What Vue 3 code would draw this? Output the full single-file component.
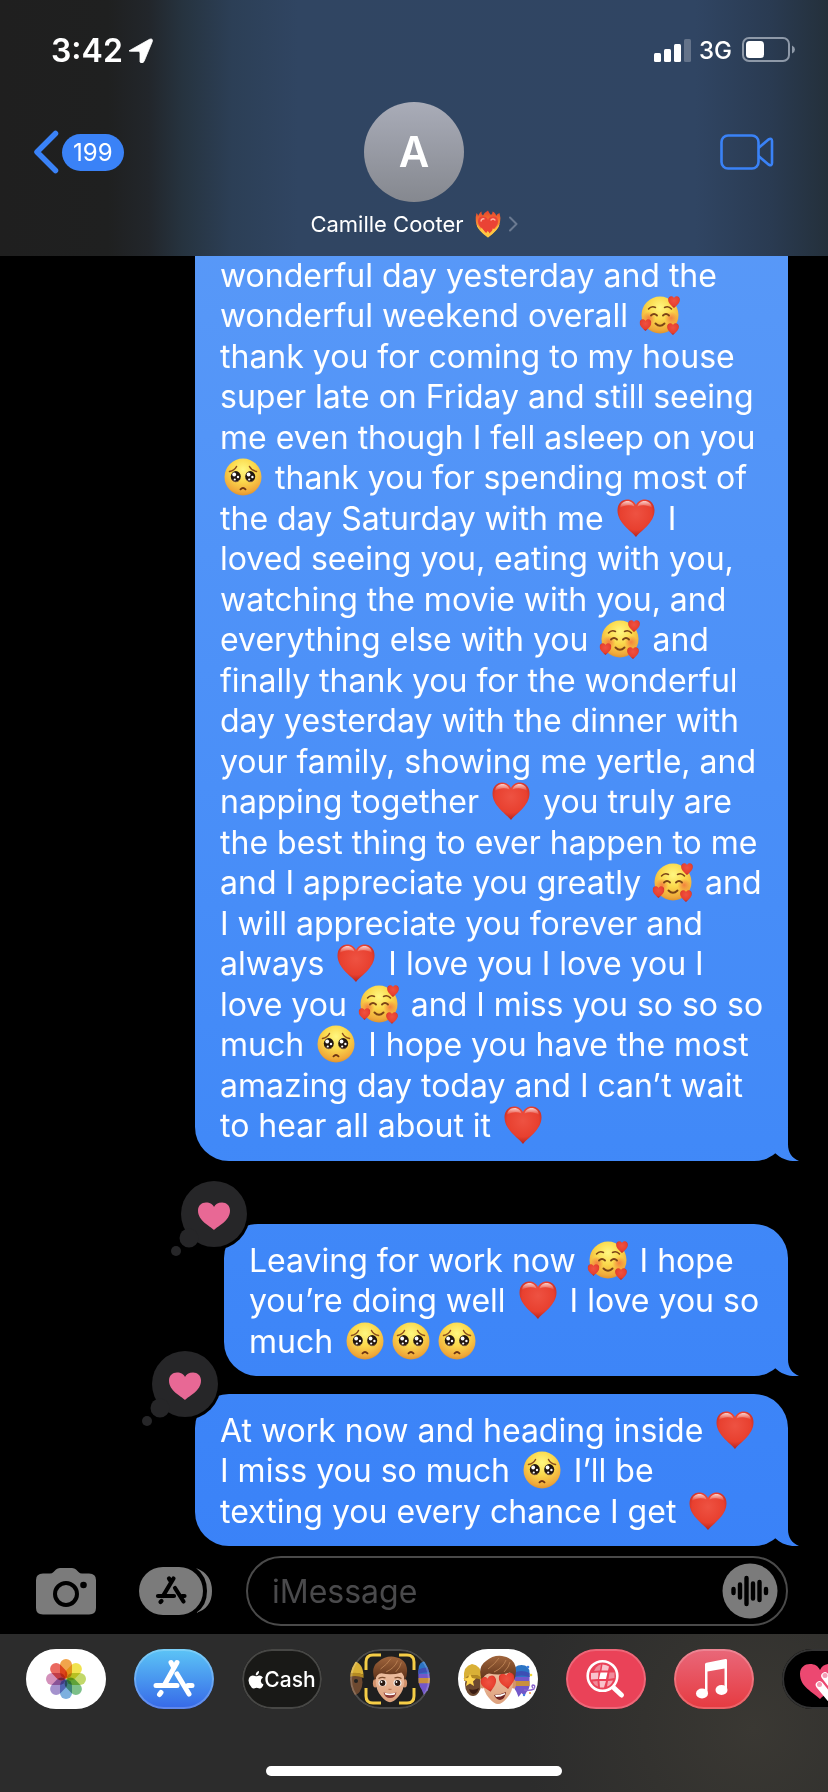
<script setup>
const LABELS = { '🥰': 'smiling face with hearts', '🥺': 'pleading face', '❤': 'red heart' }
const IDS = { '🥰': '#e-love', '🥺': '#e-plead', '❤': '#e-heart' }

const tokens = (line) =>
  line.split(/(🥰|🥺|❤)/u).filter(Boolean).map((t) => ({ text: t, icon: IDS[t], label: LABELS[t] }))

const messages = [
  {
    id: 1,
    kind: 'long',
    lines: [
      'wonderful day yesterday and the',
      'wonderful weekend overall 🥰',
      'thank you for coming to my house',
      'super late on Friday and still seeing',
      'me even though I fell asleep on you',
      '🥺 thank you for spending most of',
      'the day Saturday with me ❤ I',
      'loved seeing you, eating with you,',
      'watching the movie with you, and',
      'everything else with you 🥰 and',
      'finally thank you for the wonderful',
      'day yesterday with the dinner with',
      'your family, showing me yertle, and',
      'napping together ❤ you truly are',
      'the best thing to ever happen to me',
      'and I appreciate you greatly 🥰 and',
      'I will appreciate you forever and',
      'always ❤ I love you I love you I',
      'love you 🥰 and I miss you so so so',
      'much 🥺 I hope you have the most',
      'amazing day today and I can’t wait',
      'to hear all about it ❤',
    ].map(tokens),
  },
  {
    id: 2,
    kind: 'narrow',
    loved: true,
    lines: ['Leaving for work now 🥰 I hope', 'you’re doing well ❤ I love you so', 'much 🥺🥺🥺'].map(tokens),
  },
  {
    id: 3,
    kind: 'wide',
    loved: true,
    lines: ['At work now and heading inside ❤', 'I miss you so much 🥺 I’ll be', 'texting you every chance I get ❤'].map(tokens),
  },
]

const petals = ['#f09a37', '#f0e03c', '#bcd45a', '#6fb97c', '#6fa8dc', '#9a86c8', '#cf85b4', '#e8584f']
</script>

<template>
  <div class="phone">
    <svg class="defs" aria-hidden="true">
      <defs>
        <radialGradient id="g-face" cx=".5" cy=".3" r=".72">
          <stop offset="0" stop-color="#fff780" />
          <stop offset=".45" stop-color="#fbd94c" />
          <stop offset=".85" stop-color="#f0a93a" />
          <stop offset="1" stop-color="#dc8f2c" />
        </radialGradient>
        <radialGradient id="g-blush">
          <stop offset="0" stop-color="#f2693c" stop-opacity=".75" />
          <stop offset="1" stop-color="#f2693c" stop-opacity="0" />
        </radialGradient>
        <radialGradient id="g-heart" cx=".5" cy=".38" r=".66">
          <stop offset="0" stop-color="#ee5242" />
          <stop offset=".65" stop-color="#e8402f" />
          <stop offset="1" stop-color="#a81f1c" />
        </radialGradient>
        <linearGradient id="g-gloss" x2="0" y2="1">
          <stop offset="0" stop-color="#fff" stop-opacity=".75" />
          <stop offset="1" stop-color="#fff" stop-opacity="0" />
        </linearGradient>
        <linearGradient id="g-flame" x2="0" y2="1">
          <stop offset="0" stop-color="#e8402a" />
          <stop offset=".5" stop-color="#f78a35" />
          <stop offset="1" stop-color="#ffd94d" />
        </linearGradient>
        <linearGradient id="g-hair" x2="0" y2="1">
          <stop offset="0" stop-color="#a0653c" />
          <stop offset="1" stop-color="#5c3018" />
        </linearGradient>
        <linearGradient id="g-skin" x2="0" y2="1">
          <stop offset="0" stop-color="#f0c4a6" />
          <stop offset="1" stop-color="#dda17d" />
        </linearGradient>
        <symbol id="heart-shape" viewBox="0 0 38 38">
          <path d="M19 38C15 32.500 .5 24 .5 11.500C.5 4.500 5 .5 10 .5C14 .5 17.500 2.500 19 6C20.500 2.500 24 .5 28 .5C33 .5 37.500 4.500 37.500 11.500C37.500 24 23 32.500 19 38Z" fill="url(#g-heart)" />
        </symbol>
        <symbol id="e-heart" viewBox="0 0 46 38">
          <use href="#heart-shape" x="4" y="0" width="38" height="38" />
          <path d="M7 9C7.500 4 11 2 14.500 2C18 2 21 4.500 21.500 7.500C17 5.500 11 6 7 9ZM24.500 7.500C25 4.500 28 2 31.500 2C35 2 38.500 4 39 9C35 6 29 5.500 24.500 7.500Z" fill="url(#g-gloss)" />
        </symbol>
        <symbol id="e-plead" viewBox="0 0 46 38">
          <circle cx="23" cy="19" r="18.500" fill="url(#g-face)" />
          <ellipse cx="15.800" cy="18.500" rx="5" ry="5.400" fill="#221610" />
          <ellipse cx="30.200" cy="18.500" rx="5" ry="5.400" fill="#221610" />
          <path d="M12 21.500a4.500 4.500 0 0 0 7 1M26.500 21.500a4.500 4.500 0 0 0 7 1" fill="none" stroke="#7a5a40" stroke-width="1" />
          <g fill="#fff">
            <circle cx="14.200" cy="16.500" r="1.900" /><circle cx="28.600" cy="16.500" r="1.900" />
            <circle cx="18" cy="19" r="1.200" /><circle cx="32.400" cy="19" r="1.200" />
            <circle cx="14.800" cy="21.500" r="1.100" /><circle cx="29.200" cy="21.500" r="1.100" />
          </g>
          <path d="M9.500 13.500Q14.500 12.500 16.500 8.500M36.500 13.500Q31.500 12.500 29.500 8.500" fill="none" stroke="#8a4b1c" stroke-width="1.500" stroke-linecap="round" />
          <path d="M20.500 31.300Q23 28.800 25.500 31.300" fill="none" stroke="#6d3413" stroke-width="1.900" stroke-linecap="round" />
        </symbol>
        <symbol id="e-love" viewBox="0 0 46 38" overflow="visible">
          <circle cx="23" cy="19" r="18.500" fill="url(#g-face)" />
          <circle cx="12" cy="22" r="6.500" fill="url(#g-blush)" />
          <circle cx="34" cy="22" r="6.500" fill="url(#g-blush)" />
          <g fill="none" stroke="#7b4416" stroke-linecap="round">
            <path d="M11.500 13Q14.500 9.500 18.500 11.500M34.500 13Q31.500 9.500 27.500 11.500" stroke-width="1.500" />
            <path d="M14 19.500Q17 16.500 20 19.500M26 19.500Q29 16.500 32 19.500" stroke-width="1.900" />
            <path d="M18.500 27.500Q23 32 27.500 27.500" stroke-width="1.900" />
          </g>
          <use href="#heart-shape" x="31" y="0" width="12" height="12" />
          <use href="#heart-shape" x="2.500" y="23" width="12" height="12" />
          <use href="#heart-shape" x="30" y="27" width="12" height="12" />
        </symbol>
        <symbol id="side-left" viewBox="0 0 20 34">
          <ellipse cx="10" cy="21" rx="8" ry="12" fill="#6d4930" />
          <path d="M1 15Q0 3 9 1Q18 2 19 14Q10 10 1 15Z" fill="#d9b036" />
          <path d="M1 15Q10 9.500 19 14V17Q10 13 1 18Z" fill="#b58a22" />
        </symbol>
        <symbol id="side-right" viewBox="0 0 20 34">
          <path d="M2 10H18V22Q17 27 15 28L13 32L10 29L7 33L5 28Q1 24 2 10Z" fill="#7257c9" />
          <path d="M2 9Q2 1 10 1Q18 1 18 9V13H2Z" fill="#2c74c4" />
          <path d="M2 9Q10 5 18 9V13Q10 10 2 13Z" fill="#3c4fb4" />
          <path d="M2 17H18V22H2Z" fill="#c98f3d" />
        </symbol>
        <symbol id="boy" viewBox="0 0 40 50">
          <ellipse cx="4.500" cy="29" rx="2.500" ry="4.500" fill="#d4936c" />
          <ellipse cx="35.500" cy="29" rx="2.500" ry="4.500" fill="#d4936c" />
          <path d="M5 18Q5 10 20 10Q35 10 35 18V28Q34.500 37 29 43Q24 49 20 49Q16 49 11 43Q5.500 37 5 28Z" fill="url(#g-skin)" />
          <path d="M4 26Q-1 12 8 6Q15 0 24 1Q38 3 38 16Q38 22 35.500 26Q35.500 21 32 17.500Q22 21 11 18.500Q6 19 4 26Z" fill="url(#g-hair)" />
          <path d="M10 14Q17 9 21 3M16 17Q25 13 28 5M26 17Q31 12 32 7" fill="none" stroke="#b87f52" stroke-width="1" />
        </symbol>
      </defs>
    </svg>

    <header class="header">
      <div class="status">
        <span class="time">3:42</span>
        <svg class="arrow" width="24" height="25" viewBox="0 0 24 25"><path d="M1.500 12L20.500 1.300Q24 0 23.300 3.500L15 23.500Q13 26.500 11 24V15Q11 13.300 9.300 13.300H1.300Q-1.500 13 1.500 12Z" fill="#fff" stroke="#fff" stroke-width=".8" stroke-linejoin="round" /></svg>
        <svg class="signal" width="37" height="24" viewBox="0 0 37 24" fill="#fff">
          <rect x="0" y="15" width="7" height="9" rx="1.500" /><rect x="10" y="11" width="7" height="13" rx="1.500" />
          <rect x="20" y="6" width="7" height="18" rx="1.500" /><rect x="30" y="1" width="7" height="23" rx="1.500" opacity=".25" />
        </svg>
        <span class="network">3G</span>
        <svg width="54" height="26" viewBox="0 0 54 26">
          <rect x="1" y="1" width="46" height="23" rx="6" fill="none" stroke="#8e99a8" stroke-width="2" />
          <rect x="4" y="4" width="18" height="17" rx="3.500" fill="#fff" />
          <path d="M50 8.500Q53 10 53 12.500Q53 15 50 16.500Z" fill="#8e99a8" />
        </svg>
      </div>
      <div class="nav">
        <button class="back" type="button" aria-label="Back, 199 unread">
          <svg width="26" height="44" viewBox="0 0 26 44"><path d="M21.500 3.500L3 22L21.500 40.500" fill="none" stroke="#3a82f7" stroke-width="5.500" stroke-linecap="round" stroke-linejoin="round" /></svg>
          <span class="unread">199</span>
        </button>
        <button class="contact" type="button">
          <span class="avatar">A</span>
          <span class="name">
            Camille Cooter
            <svg class="fire" width="26" height="28" viewBox="0 0 26 28" role="img" aria-label="heart on fire">
              <path d="M13 27.500C8 23 1 18 .8 11Q.5 6 1.500 3Q3 4 3 6Q5 2 6.500 1.500Q6 4 8 5.500Q10 2 13 .5Q14 3 16 5Q18 3 17.500 1.500Q21 3 21 6Q22 4 24.500 3Q26 8 25 12C24 19 18 23 13 27.500Z" fill="url(#g-flame)" />
              <path d="M13 25C9 20 3 17 3 11.500Q3 6.500 7.500 6.500Q12 6.500 13 10Q14 6.500 18.500 6.500Q23 6.500 23 11.500C23 17 17 20 13 25Z" fill="#ea4335" />
              <path d="M6 11Q6.500 8.500 9 8.800M16 10Q18 8 20 10" fill="none" stroke="#ffb0a0" stroke-width="1.300" stroke-linecap="round" />
              <path d="M1.500 14Q4 17 5 20Q6.500 19 6.500 17.500Q9.500 20.500 9.500 23.500Q12 23 12.500 21Q14.500 22 14.500 24Q18 21 17.500 18.500Q19.500 19 20 19.500Q22 17 24.500 14Q24 19.500 13 27.500Q2 20 1.500 14Z" fill="#ffc642" />
            </svg>
            <svg width="9" height="16" viewBox="0 0 9 16"><path d="M1 1.500L7.500 8L1 14.500" fill="none" stroke="#6b7a91" stroke-width="2" stroke-linecap="round" stroke-linejoin="round" /></svg>
          </span>
        </button>
        <button class="video" type="button" aria-label="Video call">
          <svg width="54" height="36" viewBox="0 0 54 36" fill="none" stroke="#3a82f7" stroke-width="2.600" stroke-linejoin="round">
            <rect x="1.500" y="1.500" width="37" height="33" rx="6.500" />
            <path d="M38.500 14L48.500 5.500Q52 3.500 52 7V29Q52 32.500 48.500 30.500L38.500 22" />
          </svg>
        </button>
      </div>
    </header>

    <main class="thread">
      <article v-for="m in messages" :key="m.id" class="bubble" :class="m.kind">
        <p class="text">
          <span v-for="(line, i) in m.lines" :key="i" class="line"><template v-for="(t, j) in line" :key="j"><svg v-if="t.icon" class="emoji" width="46" height="38" role="img" :aria-label="t.label"><use :href="t.icon" /></svg><template v-else>{{ t.text }}</template></template></span>
        </p>
        <span class="tail"></span>
        <svg v-if="m.loved" class="tapback" width="84" height="80" viewBox="0 0 84 80" role="img" aria-label="Loved">
          <circle cx="46" cy="36" r="36" fill="#000" />
          <g fill="#262628"><circle cx="46" cy="36" r="33" /><circle cx="21" cy="60" r="9.500" /><circle cx="8" cy="73" r="5" /></g>
          <path d="M46 52C42 48 30 43 30 32.500C30 27.500 33.500 24.500 38 24.500C42 24.500 45 26.500 46 29C47 26.500 50 24.500 54 24.500C58.500 24.500 62 27.500 62 32.500C62 43 50 48 46 52Z" fill="#e86895" />
        </svg>
      </article>
    </main>

    <form class="composer" @submit.prevent>
      <button type="button" aria-label="Camera">
        <svg width="60" height="47" viewBox="0 0 60 47">
          <path d="M7 5.500H14Q16 5.500 17.500 4L20 1.500Q21.500 0 24 0H36Q38.500 0 40 1.500L42.500 4Q44 5.500 46 5.500H53Q60 5.500 60 12V40Q60 46.500 53 46.500H7Q0 46.500 0 40V12Q0 5.500 7 5.500Z" fill="#7b7b7b" />
          <circle cx="30" cy="26" r="11" fill="none" stroke="#000" stroke-width="4" /><circle cx="47.500" cy="17" r="3.300" fill="#000" />
        </svg>
      </button>
      <button type="button" class="apps-toggle" aria-label="Apps">
        <svg width="74" height="48" viewBox="0 0 74 48">
          <path d="M57 1Q73 7 73 24Q73 41 57 46Q68 39 68 24Q68 9 57 1Z" fill="#7b7b7b" />
          <rect x="0" y="0" width="64" height="48" rx="24" fill="#7b7b7b" />
          <g fill="none" stroke="#000" stroke-width="4.200" stroke-linecap="round">
            <path d="M34.500 11.500L24 29M30 11.500L32 14.500M19 29H35M43 29H45.500M36 21L44.500 34.500M22.500 34L21.500 35" />
          </g>
        </svg>
      </button>
      <div class="field">
        <input type="text" placeholder="iMessage" aria-label="iMessage" />
        <button type="button" class="voice" aria-label="Record audio">
          <svg width="56" height="56" viewBox="0 0 56 56">
            <circle cx="28" cy="28" r="27.500" fill="#7b7b7b" />
            <path d="M11.500 26V30M18 21.500V34.500M24.500 15V41M31 20.500V35.500M37.500 19V37M44 26V30" stroke="#000" stroke-width="4.400" stroke-linecap="round" />
          </svg>
        </button>
      </div>
    </form>

    <footer class="dock">
      <nav class="apps" aria-label="iMessage apps">
        <button class="app white" type="button" aria-label="Photos">
          <svg width="80" height="60" viewBox="0 0 80 60"><g transform="translate(40 30)"><rect v-for="(c, i) in petals" :key="c" class="petal" x="-6" y="-20" width="12" height="19.500" rx="6" :fill="c" :transform="`rotate(${i * 45})`" /></g></svg>
        </button>
        <button class="app store" type="button" aria-label="App Store">
          <svg width="80" height="60" viewBox="0 0 80 60"><path d="M43 13.500L31 35M37 13.500L39.500 18M22 36.500H43M54 36.500H58M43 25L55 45M27 43.500L25.500 45.500" fill="none" stroke="#fff" stroke-width="5" stroke-linecap="round" /></svg>
        </button>
        <button class="app cash" type="button">
          <svg width="16" height="19" viewBox="0 0 16 19" fill="#fff" aria-hidden="true">
            <path d="M11 1Q11.300 3.500 9.700 4.700Q8.600 5.500 7.700 5.300Q7.600 3.300 8.900 2Q10 1 11 1Z" />
            <path d="M8 6.200Q9 6.200 10 5.700Q13 5 15 7.500Q12.700 9 12.800 11.200Q13 13.500 15.500 14.500Q14 18.500 11.800 18.500Q10.500 18.500 9.800 18.100Q8.200 17.500 6.700 18.200Q5 19 3.800 17.700Q.5 14.500 .5 10.500Q.8 6 4.600 5.500Q6 5.500 8 6.200Z" />
          </svg>
          <span>Cash</span>
        </button>
        <button class="app dark" type="button" aria-label="Memoji">
          <svg width="80" height="60" viewBox="0 0 80 60">
            <use href="#side-left" x="-8" y="11" width="24" height="36" /><use href="#side-right" x="66" y="11" width="22" height="36" />
            <circle cx="6" cy="32" r="2" fill="#222" />
            <use href="#boy" x="21" y="6" width="38" height="49" />
            <g fill="#fff"><ellipse cx="32.500" cy="34" rx="4" ry="3.200" /><ellipse cx="47.500" cy="34" rx="4" ry="3.200" /></g>
            <g fill="#2b1a12"><circle cx="32.500" cy="34" r="2.900" /><circle cx="47.500" cy="34" r="2.900" /></g>
            <g fill="#fff"><circle cx="31.500" cy="33" r=".9" /><circle cx="46.500" cy="33" r=".9" /></g>
            <path d="M28.500 29.500Q32 27.500 35.500 29M44.500 29Q48 27.500 51.500 29.500" fill="none" stroke="#7d4c2c" stroke-width="1.300" />
            <path d="M38.500 40Q40 41 41.500 40" fill="none" stroke="#bb7a58" stroke-width="1.200" />
            <path d="M33.500 43.500Q40 45 46.500 43.500Q45 49 40 49Q35 49 33.500 43.500Z" fill="#8d3a34" /><path d="M34.500 43.800Q40 45.200 45.500 43.800L44.500 45.800Q40 46.500 35.500 45.800Z" fill="#fff" />
            <path d="M16 21V13Q16 6 23 6H31M49 6H57Q64 6 64 13V21M16 39V47Q16 54 23 54H31M49 54H57Q64 54 64 47V39" fill="none" stroke="#f5cd46" stroke-width="3" />
          </svg>
        </button>
        <button class="app white" type="button" aria-label="Memoji stickers">
          <svg width="80" height="60" viewBox="0 0 80 60">
            <use href="#side-left" x="3" y="14" width="24" height="34" /><use href="#side-right" x="53" y="15" width="21" height="34" />
            <path d="M12 25L14 29L18 29.500L15 32.500L16 37L12 34.500L8 37L9 32.500L5 29.500L10 29Z" fill="#ffd64f" />
            <path d="M11 40Q16 42 21 39Q19 45 15 45Q12 44 11 40Z" fill="#3b1d14" />
            <g fill="#3f7de0"><circle cx="70" cy="18" r="1.300" /><circle cx="66" cy="46" r="1.200" /></g><circle cx="73" cy="26" r="1.300" fill="#f3d936" /><circle cx="72" cy="44" r="1" fill="#ef8a3a" />
            <path d="M66 41Q72 42 76 40Q78 36 75 36Q73 37 75 39" fill="none" stroke="#8a64cf" stroke-width="1.400" />
            <use href="#boy" x="20" y="5" width="40" height="52" />
            <path d="M36 46Q42 46 48 43Q47 50.500 42 51Q38 50.500 36 46Z" fill="#6d2320" /><path d="M37 46Q43 46 47 44V45.500Q43 48 38 48Z" fill="#fff" />
            <g transform="rotate(-12 31 35)"><use href="#heart-shape" x="23" y="27" width="16" height="16" /></g>
            <g transform="rotate(-8 49 32)"><use href="#heart-shape" x="41" y="24" width="16" height="16" /></g>
          </svg>
        </button>
        <button class="app images" type="button" aria-label="#images">
          <svg width="80" height="60" viewBox="0 0 80 60">
            <path d="M48 39L55.500 46" stroke="#fff" stroke-width="5" stroke-linecap="round" />
            <circle cx="36.500" cy="27" r="14.800" fill="#ea4258" stroke="#fff" stroke-width="2.600" />
            <path d="M30 18.500Q33 15.500 35 15.500L34 21.500L28 22Z" fill="#f08a9a" /><path d="M36.500 15.500Q41 16 43 17.500L42 21.500L35.500 21.500Z" fill="#f8c3cc" />
            <path d="M25 24L32.500 23.500L32 30L25 30.500Z" fill="#f8c3cc" /><path d="M34.500 23.500H41.500L40 30H33Z" fill="#fff" /><path d="M43.500 23.500H48.500V29L42.500 30Z" fill="#f08a9a" />
            <path d="M26.500 32.500L31.500 32L32 37.500Q28 36 26.500 32.500Z" fill="#f08a9a" /><path d="M33.500 32H40L38 38.500H34Z" fill="#f8c3cc" /><path d="M42 32L47 31.500Q45 36.500 41 37.500Z" fill="#f6a9b6" />
          </svg>
        </button>
        <button class="app music" type="button" aria-label="Music">
          <svg width="80" height="60" viewBox="0 0 80 60" fill="#fff"><path d="M31 15.500Q31 14 32.500 13.700L51.500 10Q53 9.700 53 11.300V40H50.500V19.500L33.500 22.500V44H31Z" /><ellipse cx="28" cy="44.500" rx="6" ry="5" /><ellipse cx="47.500" cy="41" rx="6" ry="5" /></svg>
        </button>
        <button class="app black" type="button" aria-label="Digital Touch">
          <svg width="80" height="60" viewBox="0 0 80 60">
            <path d="M38 50C31 43 18 38 18 25C18 18 23 15 28 15C33 15 36 17 38 21C40 17 43 15 48 15C53 15 58 18 58 25C58 38 45 43 38 50Z" fill="#ec4871" />
            <path d="M37.500 36L49 50M43 27L56 44" stroke="#fff" stroke-width="7.500" stroke-linecap="round" /><circle cx="37.500" cy="35.500" r="2.500" fill="#f59ab3" /><circle cx="43" cy="26.500" r="2.500" fill="#f59ab3" />
          </svg>
        </button>
      </nav>
      <div class="home"></div>
    </footer>
  </div>
</template>

<style>
html,
body {
  background: #000;
}
</style>

<style scoped>
.phone {
  display: flex;
  flex-direction: column;
  height: 100vh;
  overflow: hidden;
  background: #000;
  color: #fff;
  font-family: Inter, "Liberation Sans", sans-serif;
}
.defs {
  position: absolute;
  width: 0;
  height: 0;
}
button {
  padding: 0;
  border: 0;
  background: none;
  color: inherit;
  font: inherit;
  cursor: pointer;
}
svg {
  display: block;
  flex: none;
}
.header {
  flex: none;
  padding-bottom: 18px;
  background: linear-gradient(90deg, #1f1f1f 0, #1f2020 13%, #22262b 18%, #26333f 22%, #2c3f56 28%, #304562 36%, #304563 84%, #2a3b52 93%, #24303b 100%);
}
.status {
  display: flex;
  align-items: center;
  height: 100px;
  margin-bottom: 2px;
  padding: 0 32px 0 51px;
  box-sizing: border-box;
}
.time {
  font-size: 32px;
  font-weight: 600;
}
.arrow {
  margin-left: 6px;
}
.signal {
  margin-left: auto;
}
.network {
  margin: 0 10px 0 8px;
  font-size: 24px;
  font-weight: 500;
}
.nav {
  display: grid;
  grid-template-columns: 1fr auto 1fr;
  align-items: start;
  padding: 0 34px;
}
.back,
.video {
  display: flex;
  align-items: center;
  height: 100px;
}
.back {
  gap: 2px;
}
.video {
  justify-self: end;
  margin-right: 20px;
}
.unread {
  padding: 0 11px;
  border-radius: 19px;
  background: #3a82f7;
  font-size: 24px;
  line-height: 37px;
}
.contact {
  display: flex;
  flex-direction: column;
  align-items: center;
  gap: 8px;
}
.avatar {
  width: 100px;
  border-radius: 50%;
  background: linear-gradient(#a9acb8, #85888f);
  font-size: 42px;
  font-weight: 600;
  line-height: 100px;
}
.name {
  display: flex;
  align-items: center;
  font-size: 22px;
  line-height: 28px;
}
.fire {
  margin: 0 8px 0 11px;
}
.thread {
  display: flex;
  flex: 1;
  flex-direction: column;
  align-items: flex-end;
  justify-content: flex-end;
  gap: 18px;
  min-height: 0;
  overflow: hidden;
  padding: 0 40px 0 24px;
}
.bubble,
.tail {
  background: linear-gradient(#5999f8 200px, #4189f8 1140px, #3a82f8 1560px) fixed;
}
.bubble {
  position: relative;
  flex: none;
  box-sizing: border-box;
  width: 80%;
  max-width: 593px;
  padding: 16px 24px 14px 25px;
  border-radius: 34px;
}
.bubble.long {
  margin-bottom: 45px;
  padding-top: 40px;
  padding-bottom: 15px;
}
.bubble.narrow {
  max-width: 564px;
}
.text {
  margin: 0;
  font-size: 32px;
}
.line {
  display: block;
  line-height: 41px;
  white-space: pre;
}
.line:nth-child(even) {
  line-height: 40px;
}
.emoji {
  display: inline-block;
  overflow: visible;
  vertical-align: -7px;
}
.tail {
  position: absolute;
  right: -12px;
  bottom: 0;
  width: 46px;
  height: 34px;
  clip-path: path("M34 0V17C34 26 38 31 45 34C36 35 27 32 21 26L10 10Z");
}
.tapback {
  position: absolute;
  top: -46px;
  left: -56px;
}
.composer {
  display: flex;
  flex: none;
  align-items: center;
  padding: 10px 40px 8px 36px;
}
.apps-toggle {
  margin: 0 33px 0 43px;
}
.field {
  display: flex;
  flex: 1;
  align-items: center;
  box-sizing: border-box;
  height: 70px;
  min-width: 0;
  padding: 0 8px 0 24px;
  border: 2px solid #4a4a4a;
  border-radius: 35px;
}
.field input {
  flex: 1;
  min-width: 0;
  padding: 0;
  border: 0;
  outline: 0;
  background: none;
  color: #fff;
  font: inherit;
  font-size: 32px;
}
.field input::placeholder {
  color: #4a4a4c;
  opacity: 1;
}
.dock {
  flex: none;
  padding: 15px 0 16px;
  background: radial-gradient(circle at 91% 60%, #3a3833 0, #33322f 110px, #2c2c2c 230px);
}
.apps {
  display: flex;
  gap: 28px;
  overflow: hidden;
  padding-left: 26px;
}
.app {
  position: relative;
  display: flex;
  flex: none;
  align-items: center;
  justify-content: center;
  width: 80px;
  height: 60px;
  overflow: hidden;
  border-radius: 30px;
}
.app::after {
  content: "";
  position: absolute;
  inset: 0;
  border: 2px solid rgb(255 255 255 / 20%);
  border-radius: 30px;
}
.white {
  background: #fff;
}
.petal {
  mix-blend-mode: multiply;
  opacity: 0.9;
}
.store {
  background: linear-gradient(#5cc5f6, #3668e8);
}
.cash {
  background: #191917;
  font-size: 21px;
  font-weight: 500;
}
.dark {
  background: #1f1f1f;
}
.images {
  background: #ea4258;
}
.music {
  background: linear-gradient(#e9687a, #e63a40);
}
.black {
  background: #000;
}
.home {
  width: 296px;
  height: 10px;
  margin: 57px auto 0;
  border-radius: 5px;
  background: #fff;
}
</style>
